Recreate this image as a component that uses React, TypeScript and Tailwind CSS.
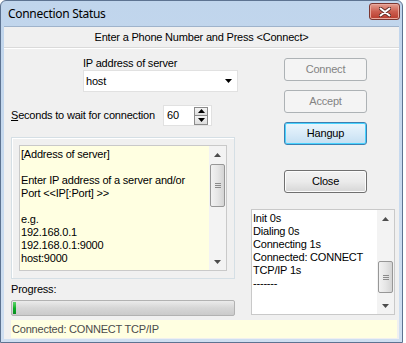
import React from 'react'

// ── Small pieces ────────────────────────────────────────────────────────────

function Arrow({ dir }: { dir: 'up' | 'down' }) {
  return (
    <svg width="7" height="4" viewBox="0 0 7 4">
      {dir === 'up'
        ? <path d="M0 4 L3.5 0 L7 4 Z" fill="#4d4d4d" />
        : <path d="M0 0 L7 0 L3.5 4 Z" fill="#4d4d4d" />}
    </svg>
  )
}

function ScrollBar({ before, thumb }: { before: string; thumb: string }) {
  return (
    <div className="flex flex-col w-[17px] shrink-0 bg-[#f3f3f3]">
      <div className="h-[17px] flex items-center justify-center">
        <Arrow dir="up" />
      </div>
      <div className="flex-1 flex flex-col">
        <div className={before} />
        <div
          className={[
            thumb,
            'mx-[1px] rounded-[2px] border border-[#979797] flex flex-col items-center justify-center gap-[1px]',
            'bg-gradient-to-r from-[#f2f2f2] via-[#e6e6e6] to-[#d4d4d4]',
          ].join(' ')}
        >
          {[0, 1, 2].map(i => (
            <span key={i} className="block w-[6px] h-[1px] bg-[#8b8b8b]" />
          ))}
        </div>
        <div className="flex-1" />
      </div>
      <div className="h-[17px] flex items-center justify-center">
        <Arrow dir="down" />
      </div>
    </div>
  )
}

function DlgButton({ label, kind }: { label: string; kind: 'disabled' | 'default' | 'normal' }) {
  return (
    <div
      className={[
        'w-[83px] h-[23px] rounded-[3px] border flex items-center justify-center text-[11px]',
        kind === 'disabled'
          ? 'border-[#adb2b5] bg-[#f4f4f4] text-[#838383]'
          : kind === 'default'
          ? 'border-[#3c7fb1] bg-gradient-to-b from-[#eaf6fd] via-[#d9ebf8] to-[#c4dff2] text-black shadow-[inset_0_0_0_1px_#48d3ff]'
          : 'border-[#707070] bg-gradient-to-b from-[#f2f2f2] via-[#ebebeb] to-[#d6d6d6] text-black shadow-[inset_0_0_0_1px_#fcfcfc]',
      ].join(' ')}
    >
      {label}
    </div>
  )
}

// ── Component ───────────────────────────────────────────────────────────────

const HELP_LINES = [
  '[Address of server]',
  '',
  'Enter IP address of a server and/or',
  'Port <<IP[:Port] >>',
  '',
  'e.g.',
  '192.168.0.1',
  '192.168.0.1:9000',
  'host:9000',
]

const LOG_LINES = ['Init 0s', 'Dialing 0s', 'Connecting 1s', 'Connected: CONNECT', 'TCP/IP 1s', '-------']

export default function App() {
  return (
    <div className="w-[406px] h-[343px] bg-white font-['Liberation_Sans',Arial,sans-serif] text-[11px] leading-[13px] text-black tracking-[-0.2px]">
      <div className="w-[403px] h-[343px] flex flex-col rounded-t-[6px] border border-[#5d7391] bg-gradient-to-b from-[#c0d5ec] to-[#cfdff1]">

        {/* Title bar */}
        <div className="h-[25px] shrink-0 flex items-center justify-between pl-[7px] pr-[2px]">
          <span className="font-['Noto_Sans',sans-serif] text-[12px] tracking-[-0.3px] text-black">Connection Status</span>
          <div className="w-[31px] h-[17px] mt-[-4px] rounded-[3px] border border-[#7b3731] bg-gradient-to-b from-[#e3a092] via-[#cc5e50] to-[#b83a2c] flex items-center justify-center shadow-[inset_0_0_0_1px_#e9a99d]">
            <svg width="12" height="10" viewBox="0 0 12 10">
              <path d="M1.5 1.5 L10.5 8.5 M10.5 1.5 L1.5 8.5" stroke="#5a2a24" strokeWidth="3.6" strokeLinecap="round" />
              <path d="M1.5 1.5 L10.5 8.5 M10.5 1.5 L1.5 8.5" stroke="#ffffff" strokeWidth="2" strokeLinecap="round" />
            </svg>
          </div>
        </div>

        {/* Client area */}
        <div className="flex-1 mx-[3px] mb-[3px] bg-[#f0f0f0] flex flex-col border-t border-[#9fb3cb]">
          {/* Header */}
          <div className="h-[21px] shrink-0 flex items-center justify-center border-b border-[#dadada]">
            Enter a Phone Number and Press &lt;Connect&gt;
          </div>
          <div className="h-[1px] bg-white" />

          {/* Body */}
          <div className="flex flex-1">
            {/* Left column */}
            <div className="w-[224px] ml-[7px] flex flex-col">
              <div className="ml-[72px] mt-[8px]">IP address of server</div>
              <div className="ml-[72px] w-[155px] h-[22px] bg-white border border-[#e1e1e1] flex items-center justify-between pl-[2px] pr-[5px]">
                <span>host</span>
                <svg width="7" height="4" viewBox="0 0 7 4"><path d="M0 0 L7 0 L3.5 4 Z" fill="#000" /></svg>
              </div>

              <div className="flex items-center mt-[13px] h-[21px]">
                <span className="w-[152px]"><span className="underline">S</span>econds to wait for connection</span>
                <div className="w-[49px] h-[21px] bg-white border border-[#e1e1e1] flex items-center justify-between pl-[3px] pr-[3px]">
                  <span>60</span>
                  <div className="flex flex-col">
                    <div className="w-[14px] h-[9px] border border-[#8c8c8c] bg-gradient-to-b from-[#f4f4f4] to-[#dedede] flex items-center justify-center">
                      <svg width="7" height="4" viewBox="0 0 7 4"><path d="M0 4 L3.5 0 L7 4 Z" fill="#000" /></svg>
                    </div>
                    <div className="w-[14px] h-[9px] border border-t-0 border-[#8c8c8c] bg-gradient-to-b from-[#f4f4f4] to-[#dedede] flex items-center justify-center">
                      <svg width="7" height="4" viewBox="0 0 7 4"><path d="M0 0 L7 0 L3.5 4 Z" fill="#000" /></svg>
                    </div>
                  </div>
                </div>
              </div>

              {/* Group with help text */}
              <div className="mt-[11px] h-[142px] border border-[#d5dfe5] shadow-[inset_1px_1px_0_#fff] p-[7px] flex">
                <div className="flex-1 flex border border-[#c9c9c9] bg-[#ffffe1]">
                  <div className="flex-1 pt-[2px] pl-[1px]">
                    {HELP_LINES.map((l, i) => (
                      <div key={i} className="h-[13px]">{l}</div>
                    ))}
                  </div>
                  <ScrollBar before="h-[1px]" thumb="h-[43px]" />
                </div>
              </div>

              <div className="mt-[4px]">Progress:</div>
              <div className="mt-[4px] h-[16px] rounded-[2px] border border-[#b2b2b2] bg-gradient-to-b from-[#ebebeb] via-[#d6d6d6] to-[#cbcbcb] p-[1px] flex">
                <div className="w-[3px] bg-gradient-to-b from-[#5ad46a] via-[#06b025] to-[#0a8c20]" />
              </div>
            </div>

            {/* Right column */}
            <div className="w-[144px] ml-[16px] flex flex-col">
              <div className="ml-[33px] mt-[9px] flex flex-col gap-[9px]">
                <DlgButton label="Connect" kind="disabled" />
                <DlgButton label="Accept" kind="disabled" />
                <DlgButton label="Hangup" kind="default" />
                <div className="mt-[16px]"><DlgButton label="Close" kind="normal" /></div>
              </div>

              <div className="mt-[16px] h-[106px] bg-white border border-[#c9c9c9] flex">
                <div className="flex-1 pt-[2px] pl-[1px]">
                  {LOG_LINES.map((l, i) => (
                    <div key={i} className="h-[13px]">{l}</div>
                  ))}
                </div>
                <ScrollBar before="h-[34px]" thumb="h-[32px]" />
              </div>
            </div>
          </div>

          {/* Status bar */}
          <div className="h-[18px] ml-[7px] mr-[2px] mb-[1px] mt-[4px] bg-[#ffffe1] flex items-center pl-[1px] text-[#4b4b4b]">
            Connected: CONNECT TCP/IP
          </div>
        </div>
      </div>
    </div>
  )
}
